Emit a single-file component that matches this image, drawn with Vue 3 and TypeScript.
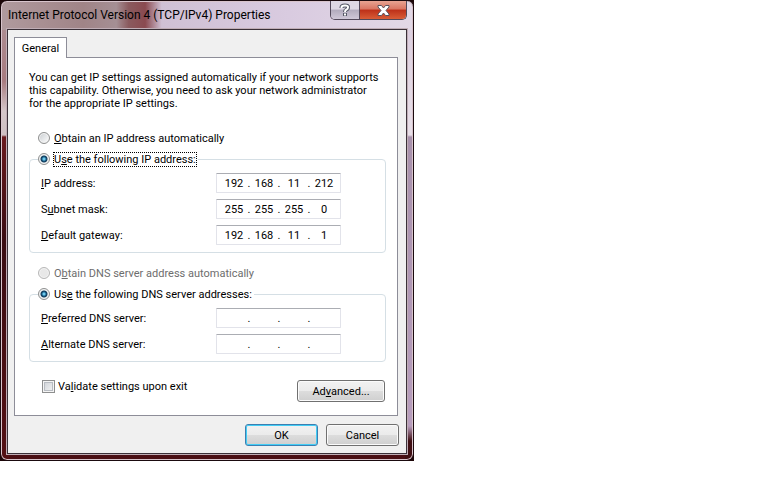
<script setup lang="ts">
import { reactive, ref } from 'vue'

interface AddressRow {
  id: string
  before: string
  key: string
  after: string
  parts: string[]
}

const ipMode = ref('manual')
const dnsMode = ref('manual')
const validate = ref(false)

const ipRows = reactive<AddressRow[]>([
  { id: 'ip', before: '', key: 'I', after: 'P address:', parts: ['192', '168', '11', '212'] },
  { id: 'mask', before: 'S', key: 'u', after: 'bnet mask:', parts: ['255', '255', '255', '0'] },
  { id: 'gateway', before: '', key: 'D', after: 'efault gateway:', parts: ['192', '168', '11', '1'] },
])

const dnsRows = reactive<AddressRow[]>([
  { id: 'dns1', before: '', key: 'P', after: 'referred DNS server:', parts: ['', '', '', ''] },
  { id: 'dns2', before: '', key: 'A', after: 'lternate DNS server:', parts: ['', '', '', ''] },
])
</script>

<template>
  <main class="dialog">
    <div class="glass">
      <header class="titlebar">
        <h1>Internet Protocol Version 4 (TCP/IPv4) Properties</h1>
        <div class="captions">
          <button type="button" class="help" aria-label="Help">
            <svg viewBox="0 0 12 14" width="12" height="14" aria-hidden="true">
              <path d="M2.500 5V4.500Q2.500 2.500 6 2.500T9 4.500Q9 6 7.500 6.500Q6 7.200 6 9M6 10v3" fill="none" stroke="#555866" stroke-width="4" />
              <path d="M2.500 5V4.500Q2.500 2.500 6 2.500T9 4.500Q9 6 7.500 6.500Q6 7.200 6 9M6 10.500v2" fill="none" stroke="#fff" stroke-width="2" />
            </svg>
          </button>
          <button type="button" class="close" aria-label="Close">
            <svg viewBox="0 0 13 11" width="13" height="11" aria-hidden="true">
              <path d="M1 .5h3.500L6.500 3 8.500.5H12v1.500L9 5.500 12 9v1.500H8.500L6.500 8l-2 2.500H1V9l3-3.500L1 2z" fill="#fff" stroke="#59515c" />
            </svg>
          </button>
        </div>
      </header>
      <form class="client" @submit.prevent>
        <div class="tabs"><button type="button" class="tab">General</button></div>
        <section class="panel">
          <p class="intro">
            You can get IP settings assigned automatically if your network supports<br />
            this capability. Otherwise, you need to ask your network administrator<br />
            for the appropriate IP settings.
          </p>
          <label class="choice"><input v-model="ipMode" type="radio" name="ip" value="auto" /><span><u>O</u>btain an IP address automatically</span></label>
          <fieldset>
            <legend><label class="choice"><input v-model="ipMode" type="radio" name="ip" value="manual" /><span class="focused">U<u>s</u>e the following IP address:</span></label></legend>
            <div v-for="row in ipRows" :key="row.id" class="row">
              <label :for="row.id">{{ row.before }}<u>{{ row.key }}</u>{{ row.after }}</label>
              <div class="address">
                <template v-for="(part, i) in row.parts" :key="i">
                  <span v-if="i > 0" class="dot">.</span>
                  <input :id="i === 0 ? row.id : undefined" v-model="row.parts[i]" type="text" maxlength="3" :aria-label="`Octet ${i + 1}`" />
                </template>
              </div>
            </div>
          </fieldset>
          <label class="choice disabled"><input v-model="dnsMode" type="radio" name="dns" value="auto" disabled /><span>O<u>b</u>tain DNS server address automatically</span></label>
          <fieldset>
            <legend><label class="choice"><input v-model="dnsMode" type="radio" name="dns" value="manual" /><span>Us<u>e</u> the following DNS server addresses:</span></label></legend>
            <div v-for="row in dnsRows" :key="row.id" class="row">
              <label :for="row.id">{{ row.before }}<u>{{ row.key }}</u>{{ row.after }}</label>
              <div class="address">
                <template v-for="(part, i) in row.parts" :key="i">
                  <span v-if="i > 0" class="dot">.</span>
                  <input :id="i === 0 ? row.id : undefined" v-model="row.parts[i]" type="text" maxlength="3" :aria-label="`Octet ${i + 1}`" />
                </template>
              </div>
            </div>
          </fieldset>
          <div class="options">
            <label class="check"><input v-model="validate" type="checkbox" /><span>Va<u>l</u>idate settings upon exit</span></label>
            <button type="button" class="push wide">Ad<u>v</u>anced...</button>
          </div>
        </section>
        <footer>
          <button type="submit" class="push default">OK</button>
          <button type="button" class="push">Cancel</button>
        </footer>
      </form>
    </div>
  </main>
</template>

<style>
body {
  background: #fff;
}
</style>

<style scoped>
* {
  box-sizing: border-box;
}
.dialog {
  max-width: 414px;
  background: #1c0608;
  font-family: Roboto, "Noto Sans", sans-serif;
  font-size: 11px;
  line-height: 13px;
  color: #000;
}
.glass {
  border: 1px solid #1a0a0e;
  border-radius: 7px;
  padding: 0 6px 6px;
  box-shadow: inset 0 0 0 1px #d8c4cc;
  background:
    linear-gradient(90deg, #b09a9e 0, #a08487 20%, #a58f94 28%, #8a5a5e 31%, #8a4a50 35%, #cfc0d4 39%, #d9cbe0 70%, #e2d8e6 100%) top / 100% 29px no-repeat,
    linear-gradient(#b09499 0, #a87c80 80px, #d4c6c8 110px, #cfc0c2 134px, #6a1a1e 136px, #3a0d12 240px, #541014 100%) left / 8px 100% no-repeat,
    linear-gradient(#d9cbdd 0, #e8dfe8 134px, #a891ac 136px, #b79dbd 425px, #401014 440px) right / 8px 100% no-repeat,
    #4a0f14;
}
.titlebar {
  display: flex;
  justify-content: space-between;
  align-items: flex-start;
  height: 28px;
}
h1 {
  margin: 0;
  padding: 6px 0 0 1px;
  font-size: 12px;
  font-weight: 400;
  line-height: 16px;
  white-space: nowrap;
}
.captions {
  display: flex;
  border: 1px solid #52495a;
  border-top: 0;
  border-radius: 0 0 5px 5px;
  overflow: hidden;
}
.captions button {
  display: grid;
  place-items: center;
  height: 18px;
  padding: 0;
  border: 0;
}
.help {
  width: 28px;
  background: linear-gradient(#ded8e4 0 45%, #b2abbd 50%, #d0c8d8);
}
.captions .close {
  width: 47px;
  border-left: 1px solid #52495a;
  background: linear-gradient(#e8a392 0, #d97562 45%, #bd3019 50%, #d95d37);
}
.client {
  padding: 7px 7px 7px 6px;
  border: 1px solid #3a3038;
  outline: 1px solid #c0aeb6;
  background: #f0f0f0;
}
.tabs {
  display: flex;
}
.tab {
  width: 53px;
  height: 21px;
  margin-bottom: -1px;
  padding: 0;
  border: 1px solid #8d8d98;
  border-bottom: 0;
  background: #fff;
  font: inherit;
  z-index: 1;
}
.panel {
  display: flex;
  flex-direction: column;
  margin-right: 1px;
  padding: 13px 11px 13px 14px;
  border: 1px solid #8d8d98;
  background: #fff;
}
.intro {
  margin: 0 0 21px;
  white-space: nowrap;
}
.choice {
  display: flex;
  align-items: center;
  gap: 4px;
  height: 14px;
  white-space: nowrap;
}
.panel > .choice {
  margin-left: 9px;
}
u {
  text-underline-offset: 1px;
}
.choice input {
  appearance: none;
  width: 12px;
  height: 12px;
  margin: 0;
  border: 1px solid #8e8f8f;
  border-radius: 50%;
  background: linear-gradient(135deg, #c8ccd0, #fff);
  box-shadow: inset 0 0 0 1px #f4f4f4;
}
.choice input:checked {
  background: radial-gradient(circle at 50% 50%, #6ec8ea 0 1px, #17608c 2px, #123a58 3px, #e8ecee 4px);
}
.disabled {
  color: #6d6d6d;
}
.choice input:disabled {
  border-color: #b8b8b8;
  background: #e8e8e8;
}
.focused {
  outline: 1px dotted #000;
}
fieldset {
  display: flex;
  flex-direction: column;
  gap: 6px;
  min-width: 0;
  margin: 7px 0 13px;
  padding: 7px 11px;
  border: 1px solid #d5dfe5;
  border-radius: 4px;
}
legend {
  margin-left: -3px;
  padding: 0 2px 0 0;
}
.row {
  display: grid;
  grid-template-columns: 175px 125px;
  align-items: center;
}
.address {
  display: flex;
  height: 20px;
  padding: 0 4px 0 5px;
  border: 1px solid #e2e3ea;
  border-top-color: #abadb3;
  border-radius: 1px;
}
.address input {
  width: 24px;
  padding: 0;
  border: 0;
  background: none;
  font: inherit;
  text-align: center;
}
.dot {
  width: 6px;
  line-height: 19px;
  text-align: center;
}
.options {
  display: flex;
  justify-content: space-between;
  align-items: flex-start;
  margin: 5px 1px 0 13px;
}
.check {
  display: flex;
  align-items: center;
  gap: 3px;
}
.check input {
  appearance: none;
  width: 13px;
  height: 13px;
  margin: 0;
  border: 1px solid #8e8f8f;
  background: linear-gradient(135deg, #cbcfd5, #f6f6f6);
  box-shadow: inset 0 0 0 1px #f4f4f4, inset 0 0 0 2px #b8bcc2;
}
.push {
  width: 73px;
  height: 22px;
  padding: 0;
  border: 1px solid #707070;
  border-radius: 3px;
  background: linear-gradient(#f2f2f2, #ebebeb 50%, #dddddd 50%, #cfcfcf);
  box-shadow: inset 0 0 0 1px #fbfbfb;
  font: inherit;
}
.wide {
  width: 88px;
}
.default {
  border-color: #3c7fb1;
  box-shadow: inset 0 0 0 1px #43cdf5;
}
footer {
  display: flex;
  justify-content: flex-end;
  gap: 8px;
  padding-top: 8px;
}
</style>
